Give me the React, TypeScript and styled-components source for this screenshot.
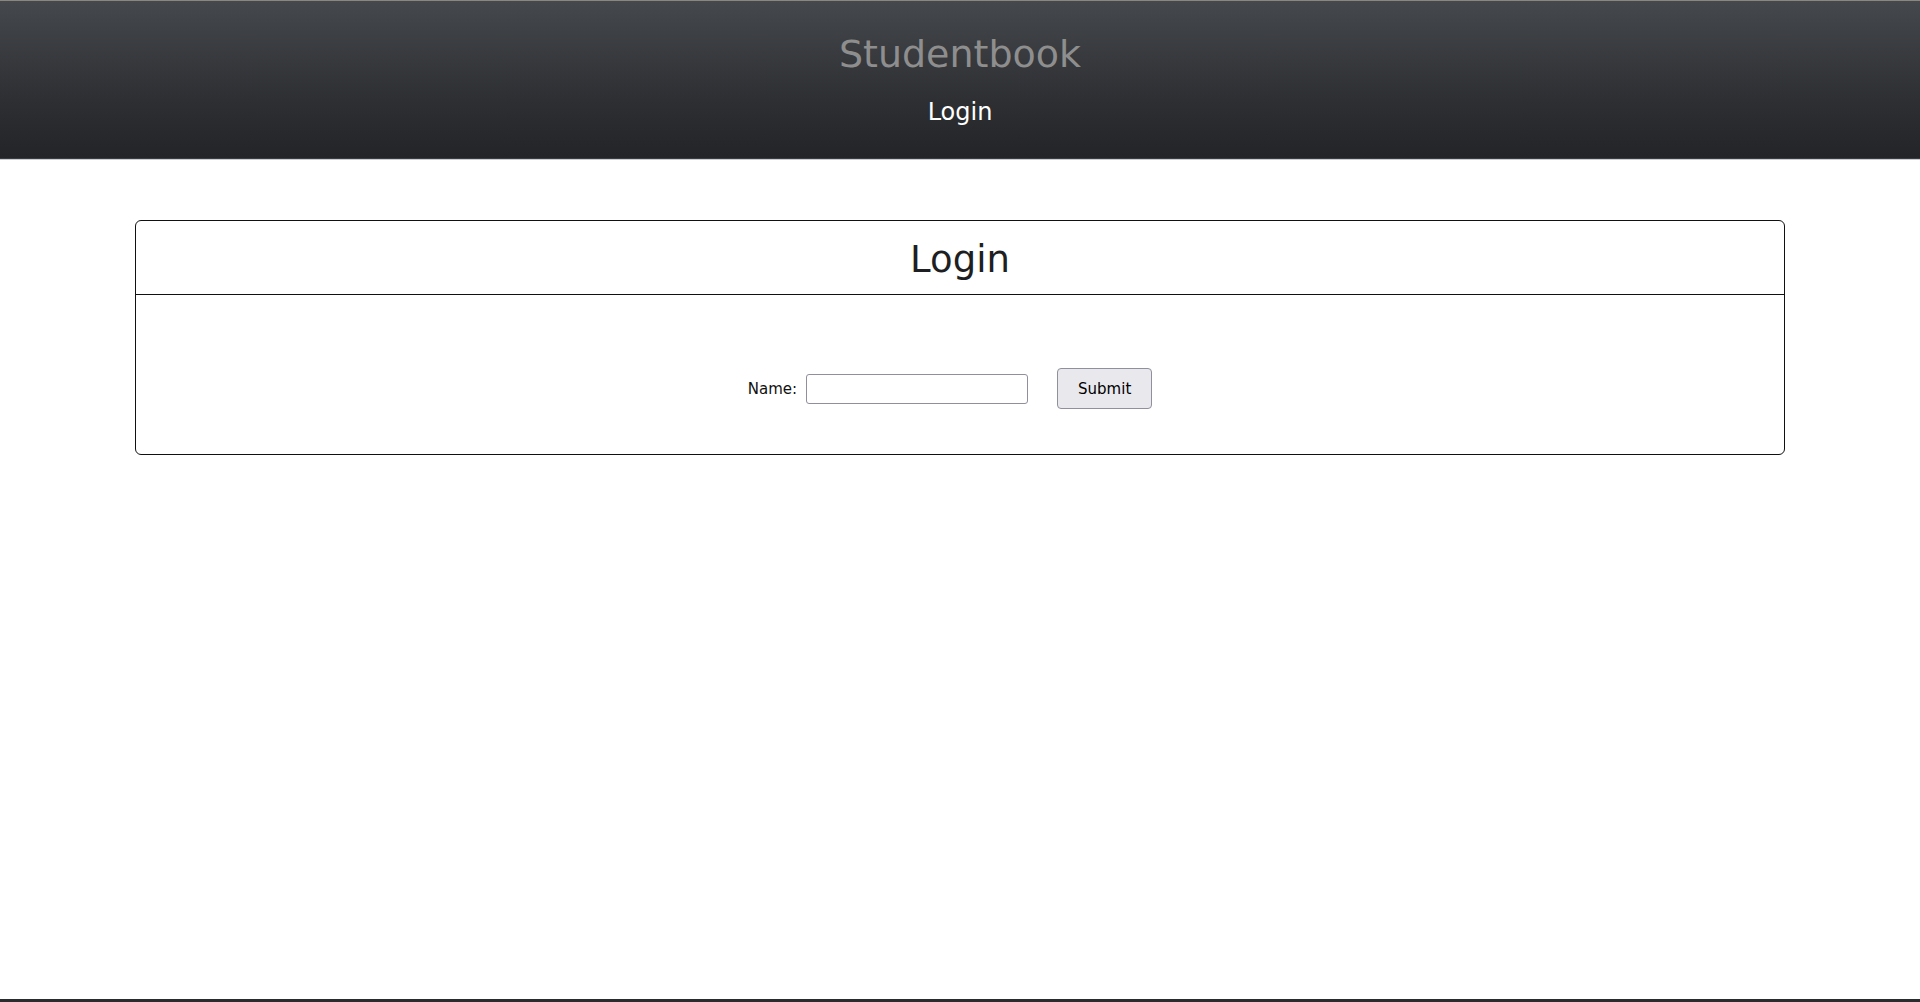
import React from "react";
import styled, { createGlobalStyle } from "styled-components";

const GlobalStyle = createGlobalStyle`
  html, body {
    margin: 0;
    padding: 0;
    background: #ffffff;
  }
  body {
    font-family: "Comic Sans MS", "DejaVu Sans", sans-serif;
  }
  * { box-sizing: border-box; }
`;

const Page = styled.div`
  min-height: 100vh;
  display: flex;
  flex-direction: column;
  font-family: "Comic Sans MS", "DejaVu Sans", sans-serif;
`;

const Header = styled.header`
  height: 160px;
  padding-top: 31px;
  border-top: 1px solid #8a877d;
  border-bottom: 1px solid #c9cdd1;
  background: linear-gradient(to bottom, #45484c 0%, #2e3034 60%, #222428 100%);
  box-shadow: inset 0 -1px 0 #393c40;
  display: flex;
  flex-direction: column;
  align-items: center;
`;

const SiteTitle = styled.h1`
  margin: 0;
  font-size: 38px;
  line-height: 44px;
  font-weight: normal;
  color: #8e8e8e;
`;

const SubTitle = styled.div`
  margin-top: 22px;
  font-size: 24px;
  line-height: 28px;
  color: #ffffff;
`;

const Main = styled.main`
  flex: 1;
  padding: 60px 135px 0 135px;
`;

const Card = styled.section`
  border: 1px solid #111;
  border-radius: 6px;
`;

const CardHead = styled.div`
  padding: 17px 0 12px;
  border-bottom: 1px solid #111;
  text-align: center;
`;

const CardTitle = styled.h2`
  margin: 0;
  font-size: 37px;
  line-height: 44px;
  font-weight: normal;
  color: #1e1f22;
`;

const CardBody = styled.div`
  padding: 73px 20px 45px 0;
`;

const FormRow = styled.form`
  display: flex;
  align-items: center;
  justify-content: center;
`;

const Label = styled.label`
  font-size: 15px;
  color: #111;
  margin-right: 9px;
`;

const TextInput = styled.input`
  width: 222px;
  height: 30px;
  border: 1px solid #8f8f9d;
  border-radius: 3px;
  background: #fff;
  padding: 2px 6px;
  font-family: inherit;
  font-size: 15px;
  margin-right: 29px;
`;

const SubmitButton = styled.button`
  width: 95px;
  height: 41px;
  border: 1px solid #8f8f9d;
  border-radius: 4px;
  background: #e9e9ed;
  color: #000;
  font-family: inherit;
  font-size: 15px;
  font-weight: normal;
  padding: 0;
`;

const Footer = styled.footer`
  height: 3px;
  background: #2a2b2d;
`;

export default function App() {
  return (
    <>
      <GlobalStyle />
      <Page>
        <Header>
          <SiteTitle>Studentbook</SiteTitle>
          <SubTitle>Login</SubTitle>
        </Header>
        <Main>
          <Card>
            <CardHead>
              <CardTitle>Login</CardTitle>
            </CardHead>
            <CardBody>
              <FormRow onSubmit={(e) => e.preventDefault()}>
                <Label htmlFor="name">Name:</Label>
                <TextInput id="name" type="text" />
                <SubmitButton type="submit">Submit</SubmitButton>
              </FormRow>
            </CardBody>
          </Card>
        </Main>
        <Footer />
      </Page>
    </>
  );
}
